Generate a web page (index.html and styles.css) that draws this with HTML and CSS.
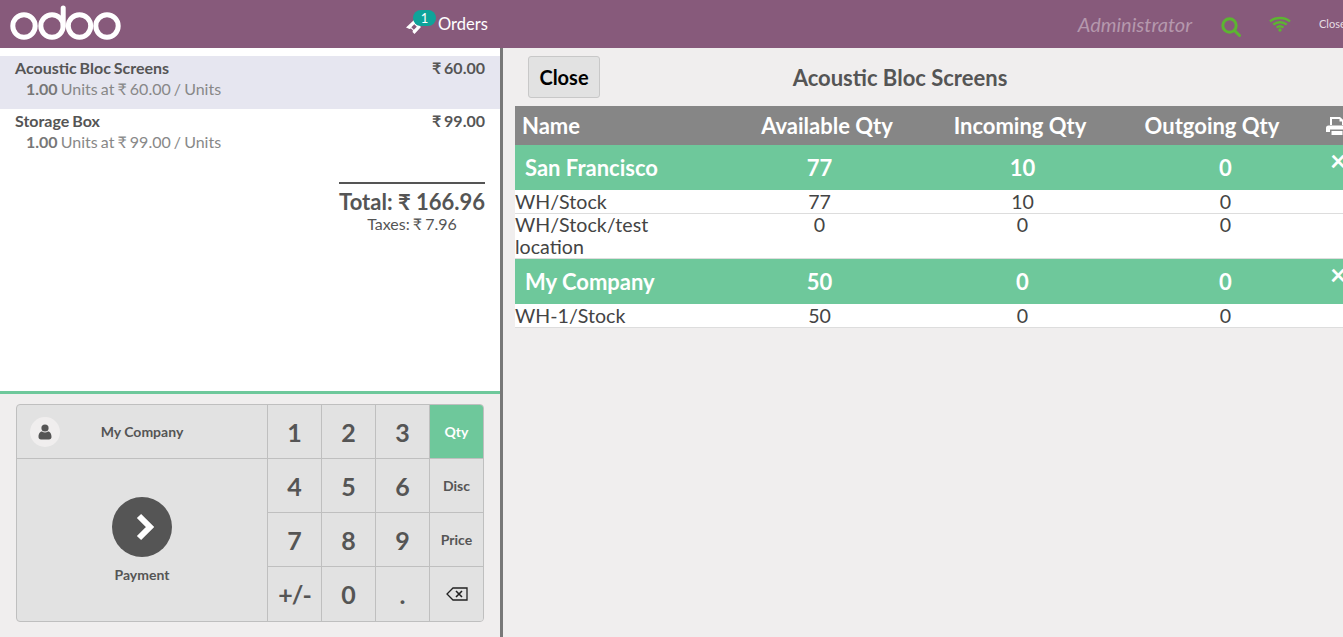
FILE: index.html
```html
<!DOCTYPE html>
<html lang="en">
<head>
    <meta charset="UTF-8">
    <meta name="viewport" content="width=device-width, initial-scale=1.0">
    <title>Point of Sale</title>
    <link rel="stylesheet" href="styles.css">
</head>
<body>
    <header class="topbar">
        <svg class="logo" width="121" height="48" viewBox="0 0 121 48" fill="none" stroke="#fff" stroke-width="5">
            <circle cx="24" cy="26" r="11.2"/>
            <circle cx="52" cy="26" r="11.2"/>
            <path d="M63.2 26V8" stroke-linecap="round"/>
            <circle cx="79.5" cy="26" r="11.2"/>
            <circle cx="107" cy="26" r="11.2"/>
        </svg>
        <div class="orders">
            <svg class="ticket" width="18" height="18" viewBox="0 0 18 18">
                <path d="M1 10.500 9 3l1.800 1.800-.5 1.400 2 2 1.400-.5L16 10l-6.500 7-2-2 .5-1.500-2-2-1.500.5z" fill="#fff"/>
                <path d="M6.300 10.300 9.300 7.300l2.500 2.500-3 3z" fill="#875a7b"/>
            </svg>
            <span class="badge">1</span>
            <span>Orders</span>
        </div>
        <div class="user">Administrator</div>
        <svg class="search" width="20" height="20" viewBox="0 0 20 20" fill="none" stroke="#5cb531" stroke-width="3">
            <circle cx="8.500" cy="8.500" r="6.700"/>
            <path d="M13.500 13.500 18.500 18.500" stroke-linecap="round"/>
        </svg>
        <svg class="wifi" width="22" height="16" viewBox="0 0 22 16" fill="none" stroke="#5cb531" stroke-width="2.400">
            <path d="M1 5.500C6 .8 16 .8 21 5.500"/>
            <path d="M4.300 8.600C8 5.400 14 5.400 17.700 8.600"/>
            <path d="M7.600 11.600c2-1.600 4.800-1.600 6.800 0"/>
            <circle cx="11" cy="14" r="1.700" fill="#5cb531" stroke="none"/>
        </svg>
        <div class="close-link">Close</div>
    </header>

    <main class="main">
        <section class="left">
            <div class="order">
                <ul class="lines">
                    <li class="line selected">
                        <div class="line-top"><span>Acoustic Bloc Screens</span><span>₹ 60.00</span></div>
                        <div class="line-info"><b>1.00</b> Units at ₹ 60.00 / Units</div>
                    </li>
                    <li class="line">
                        <div class="line-top"><span>Storage Box</span><span>₹ 99.00</span></div>
                        <div class="line-info"><b>1.00</b> Units at ₹ 99.00 / Units</div>
                    </li>
                </ul>
                <div class="summary">
                    <div class="total">Total: ₹ 166.96</div>
                    <div class="taxes">Taxes: ₹ 7.96</div>
                </div>
            </div>
            <div class="pads">
                <div class="pad">
                    <div class="actions">
                        <div class="customer">
                            <span class="avatar">
                                <svg width="14" height="16" viewBox="0 0 14 16" fill="#555">
                                    <circle cx="7" cy="4" r="3.600"/>
                                    <path d="M0.500 13c0-4 2-5.500 3.500-5.500 1 .8 2 1.100 3 1.100s2-.3 3-1.100c1.500 0 3.500 1.500 3.500 5.500 0 1.500-1 2.500-2.500 2.500H3c-1.500 0-2.500-1-2.500-2.500z"/>
                                </svg>
                            </span>
                            <span class="customer-name">My Company</span>
                        </div>
                        <div class="pay">
                            <span class="pay-circle">
                                <svg width="20" height="28" viewBox="0 0 20 28" fill="none" stroke="#fff" stroke-width="6">
                                    <path d="M4 3 15 14 4 25"/>
                                </svg>
                            </span>
                            <span class="pay-label">Payment</span>
                        </div>
                    </div>
                    <div class="keys">
                        <button class="key">1</button>
                        <button class="key">2</button>
                        <button class="key">3</button>
                        <button class="key mode active">Qty</button>
                        <button class="key">4</button>
                        <button class="key">5</button>
                        <button class="key">6</button>
                        <button class="key mode">Disc</button>
                        <button class="key">7</button>
                        <button class="key">8</button>
                        <button class="key">9</button>
                        <button class="key mode">Price</button>
                        <button class="key sign">+/-</button>
                        <button class="key">0</button>
                        <button class="key">.</button>
                        <button class="key mode">
                            <svg width="22" height="14" viewBox="0 0 22 14" fill="none" stroke="#222" stroke-width="1.300">
                                <path d="M7 1h14v12H7L1 7z"/>
                                <path d="M10 4l6 6M16 4l-6 6" stroke-width="1.600"/>
                            </svg>
                        </button>
                    </div>
                </div>
            </div>
        </section>

        <section class="right">
            <div class="title-row">
                <button class="close-btn">Close</button>
                <h2 class="title">Acoustic Bloc Screens</h2>
            </div>
            <div class="stock">
                <div class="stock-head">
                    <span class="h-name">Name</span>
                    <span class="h-col">Available Qty</span>
                    <span class="h-col">Incoming Qty</span>
                    <span class="h-col">Outgoing Qty</span>
                    <svg class="print" width="22" height="20" viewBox="0 0 22 20" fill="#fff">
                        <path d="M4 1h10l4 3.500V9H16V5.500h-2.500V3H6v6H4z"/>
                        <path d="M2.500 9.500h17A2.500 2.500 0 0 1 22 12v4h-4v-2.500H4V16H0v-4a2.500 2.500 0 0 1 2.500-2.500z"/>
                        <path d="M5.500 15h11v4h-11z"/>
                    </svg>
                </div>
                <div class="company">
                    <span>San Francisco</span><span>77</span><span>10</span><span>0</span><span class="remove">×</span>
                </div>
                <div class="loc">
                    <span>WH/Stock</span><span>77</span><span>10</span><span>0</span>
                </div>
                <div class="loc">
                    <span>WH/Stock/test location</span><span>0</span><span>0</span><span>0</span>
                </div>
                <div class="company">
                    <span>My Company</span><span>50</span><span>0</span><span>0</span><span class="remove">×</span>
                </div>
                <div class="loc">
                    <span>WH-1/Stock</span><span>50</span><span>0</span><span>0</span>
                </div>
            </div>
        </section>
    </main>
</body>
</html>
```

FILE: styles.css
```css
* {
    box-sizing: border-box;
}
html, body {
    height: 100%;
}
body {
    margin: 0;
    font-family: 'Lato', 'DejaVu Sans', sans-serif;
    color: #555;
    background-color: #f0eeee;
    overflow: hidden;
}
button {
    font-family: inherit;
}

/* top bar */
.topbar {
    height: 48px;
    background-color: #875a7b;
    display: flex;
    align-items: center;
    color: #fff;
}
.logo {
    flex: none;
}
.orders {
    display: flex;
    align-items: center;
    position: relative;
    margin-left: 284px;
    font-size: 16.500px;
}
.ticket {
    margin-top: 3px;
    margin-right: 15px;
}
.badge {
    position: absolute;
    left: 8px;
    top: -4px;
    width: 23px;
    height: 16px;
    border-radius: 8px;
    background-color: #0ea39a;
    font-size: 13px;
    line-height: 16px;
    text-align: center;
}
.user {
    margin-left: auto;
    font-size: 20px;
    font-style: italic;
    color: #b598ad;
}
.search {
    margin-left: 29px;
    margin-top: 5px;
}
.wifi {
    margin-left: 28px;
    margin-top: -1px;
}
.close-link {
    flex: none;
    width: 24px;
    margin-left: 28px;
    font-size: 11px;
    white-space: nowrap;
    overflow: hidden;
    color: #e6dde4;
    margin-top: -2px;
}

.main {
    display: flex;
    height: 589px;
}

/* left pane */
.left {
    width: 503px;
    flex: none;
    border-right: 3px solid #787878;
    display: flex;
    flex-direction: column;
}
.order {
    height: 343px;
    padding-top: 8px;
    background-color: #fff;
}
.lines {
    list-style: none;
    margin: 0;
    padding: 0;
}
.line {
    height: 53px;
    padding: 2px 15px 0;
}
.line.selected {
    background-color: #e6e6f0;
}
.line-top {
    display: flex;
    justify-content: space-between;
    font-size: 16px;
    font-weight: bold;
    line-height: 20px;
    word-spacing: -1px;
}
.line-info {
    padding-left: 11px;
    font-size: 16px;
    line-height: 22px;
    color: #888;
    word-spacing: -1px;
}
.line-info b {
    color: #777;
}
.summary {
    width: 146px;
    margin: 20px 15px 0 auto;
    border-top: 2px solid #555;
    text-align: center;
}
.total {
    font-size: 22px;
    font-weight: bold;
    line-height: 36px;
    white-space: nowrap;
    text-align: right;
}
.taxes {
    font-size: 16px;
    line-height: 8px;
    word-spacing: -1px;
}
.pads {
    flex: 1;
    border-top: 3px solid #6ec89b;
    padding: 10px 16px;
}
.pad {
    width: 468px;
    height: 218px;
    display: flex;
    border: 1px solid #bfbfbf;
    border-radius: 4px;
    overflow: hidden;
    background-color: #e2e2e2;
}
.actions {
    width: 251px;
    flex: none;
    display: flex;
    flex-direction: column;
    border-right: 1px solid #bfbfbf;
}
.customer {
    height: 54px;
    display: flex;
    align-items: center;
    padding-left: 13px;
    border-bottom: 1px solid #bfbfbf;
}
.avatar {
    width: 30px;
    height: 30px;
    border-radius: 50%;
    background-color: #f0eeee;
    display: flex;
    align-items: center;
    justify-content: center;
}
.customer-name {
    flex: 1;
    text-align: center;
    font-size: 14px;
    font-weight: bold;
    padding-right: 43px;
}
.pay {
    flex: 1;
    display: flex;
    flex-direction: column;
    align-items: center;
    padding-top: 38px;
}
.pay-circle {
    width: 60px;
    height: 60px;
    border-radius: 50%;
    background-color: #555;
    display: flex;
    align-items: center;
    justify-content: center;
    padding-left: 5px;
}
.pay-label {
    margin-top: 9px;
    font-size: 14px;
    font-weight: bold;
}
.keys {
    flex: 1;
    display: grid;
    grid-template-columns: 54px 54px 54px 53px;
    grid-template-rows: repeat(4, 54px);
}
.key {
    padding: 0;
    border: none;
    border-right: 1px solid #bfbfbf;
    border-bottom: 1px solid #bfbfbf;
    background-color: #e2e2e2;
    color: #555;
    font-size: 25px;
    font-weight: bold;
    display: flex;
    align-items: center;
    justify-content: center;
}
.key:nth-child(4n) {
    border-right: none;
}
.key:nth-child(n+13) {
    border-bottom: none;
}
.key.sign {
    letter-spacing: -1px;
}
.key.mode {
    font-size: 14px;
}
.key.active {
    background-color: #6ec89b;
    color: #fff;
}

/* right pane */
.right {
    flex: 1;
    min-width: 0;
    padding: 8px 0 0 12px;
    overflow: hidden;
}
.title-row {
    height: 42px;
    margin-bottom: 8px;
    display: flex;
    align-items: center;
    padding-left: 13px;
}
.close-btn {
    width: 72px;
    height: 42px;
    padding: 0;
    border: 1px solid #c8c8c8;
    border-radius: 3px;
    background-color: #e2e2e2;
    color: #000;
    font-size: 20px;
    font-weight: bold;
}
.title {
    width: 600px;
    margin: 0;
    font-size: 22px;
    font-weight: bold;
    text-align: center;
}
.stock {
    width: 850px;
    font-size: 19.600px;
}
.stock-head {
    height: 39px;
    display: grid;
    grid-template-columns: 212px 200px 186px 198px 54px;
    align-items: center;
    background-color: #868686;
    color: #fff;
    font-size: 22px;
    font-weight: bold;
}
.h-name {
    padding-left: 7px;
}
.h-col {
    text-align: center;
    white-space: nowrap;
}
.print {
    margin-left: 15px;
    margin-top: 1px;
}
.company, .loc {
    display: grid;
    grid-template-columns: 203px 203px 203px 203px 37px;
    text-align: center;
}
.company {
    height: 46px;
    align-items: center;
    position: relative;
    background-color: #6ec89b;
    color: #fff;
    font-size: 22px;
    font-weight: bold;
    border-bottom: 1px solid #fff;
}
.company span:first-child {
    text-align: left;
    padding-left: 10px;
}
.remove {
    position: absolute;
    left: 815px;
    top: 0;
    font-size: 28px;
    line-height: 30px;
}
.loc {
    background-color: #fff;
    color: #444;
    line-height: 22px;
    border-bottom: 1px solid #ddd;
}
.loc span:first-child {
    text-align: left;
    padding-right: 40px;
}
```
